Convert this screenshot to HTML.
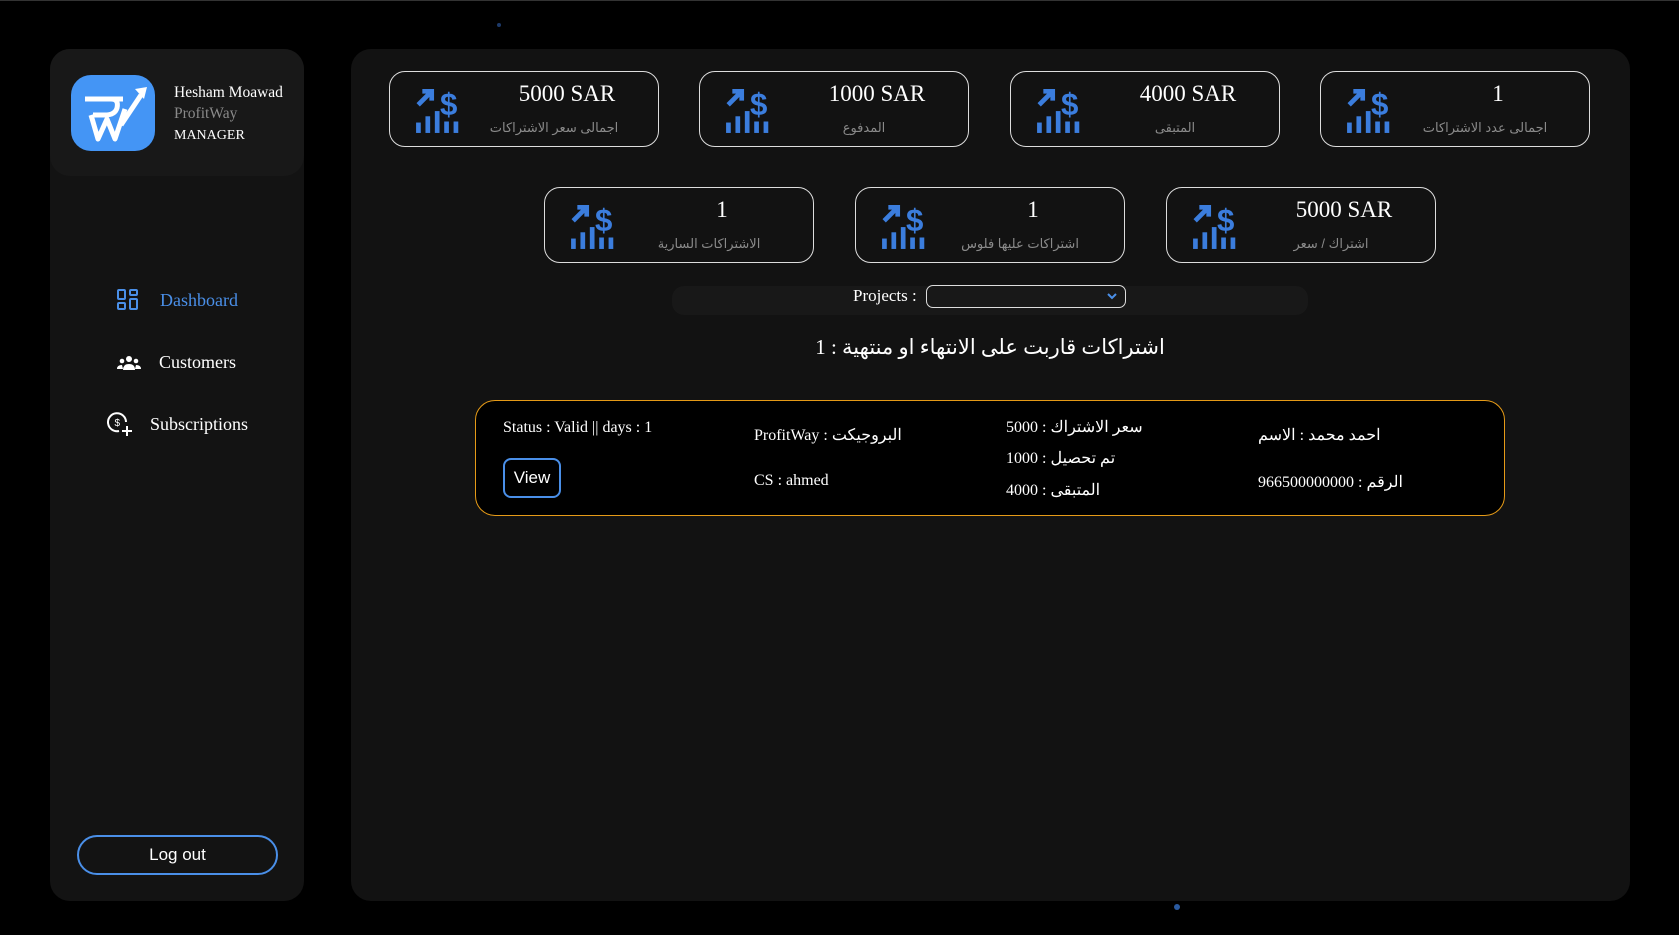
<!DOCTYPE html>
<html><head><meta charset="utf-8"><style>
*{box-sizing:border-box;margin:0;padding:0}
body{width:1679px;height:935px;background:#000;font-family:"Liberation Serif","Noto Serif CJK SC",serif;color:#fff;position:relative;overflow:hidden;border-top:1px solid #333}
.side{position:absolute;left:50px;top:48px;width:254px;height:852px;background:#131313;border-radius:20px}
.head{position:absolute;left:0;top:0;width:254px;height:127px;background:#181818;border-radius:20px}
.logo{position:absolute;left:21px;top:26px;width:84px;height:76px;background:#4495f5;border-radius:20px}
.uname{position:absolute;left:124px;top:33px;font-size:15.5px;line-height:21px}
.nav{position:absolute;left:0;font-size:18px;display:flex;align-items:center}
.main{position:absolute;left:351px;top:48px;width:1279px;height:852px;background:#121212;border-radius:20px}
.card{position:absolute;width:270px;height:76px;border:1.5px solid #ddd;border-radius:16px}
.card svg{position:absolute;left:24px;top:12px}
.card .v{position:absolute;left:100px;right:14px;top:9px;text-align:center;font-size:23px}
.card .l{position:absolute;left:80px;right:20px;top:48px;text-align:center;font-size:13px;color:#8a8a8a;font-family:"Liberation Sans","DejaVu Sans",sans-serif}
.sub{position:absolute;left:475px;top:399px;width:1030px;height:116px;background:#000;border:1.5px solid #e59a17;border-radius:20px;font-size:16px}
.sub div{position:absolute;white-space:nowrap}
.star{position:absolute;width:4px;height:4px;border-radius:50%;background:#1d3a6a}
</style></head><body>
<div class="star" style="left:497px;top:22px"></div>
<div class="star" style="left:637px;top:561px"></div>
<div class="star" style="left:437px;top:705px"></div>
<div class="star" style="left:1273px;top:658px;width:6px;height:6px"></div>
<div class="star" style="left:1174px;top:903px;width:6px;height:6px;background:#2a5aa0"></div>
<div class="star" style="left:1295px;top:606px"></div>

<div class="side">
<div class="head">
<div class="logo"><svg width="84" height="76" viewBox="0 0 84 76"><g fill="none" stroke="#fff" stroke-width="5" stroke-linejoin="round"><path d="M14 24 H40 Q48 24 46 33 Q44 40 34 40 H22"/><path d="M20 40 L27 64 L36 44 L44 64 L54 34"/><path d="M40 24 H52"/><path d="M50 50 L70 20"/></g><path d="M64 14 L76 12 L73 24 Z" fill="#fff"/></svg></div>
<div class="uname">Hesham Moawad<br><span style="color:#8a8a8a">ProfitWay</span><br><span style="font-size:14px">MANAGER</span></div>
</div>
<div class="nav" style="left:67px;top:240px;color:#4a8fe8"><svg width="22" height="22" viewBox="0 0 22 22" fill="none" stroke="#4a8fe8" stroke-width="2"><rect x="1" y="1" width="7" height="9" rx="1"/><rect x="13" y="1" width="7" height="5" rx="1"/><rect x="1" y="14" width="7" height="6" rx="1"/><rect x="13" y="10" width="7" height="10" rx="1"/></svg><span style="margin-left:21px">Dashboard</span></div>
<div class="nav" style="left:67px;top:303px"><svg width="24" height="16" viewBox="0 0 24 16" fill="#fff"><circle cx="12" cy="4" r="3"/><circle cx="5" cy="6" r="2.3"/><circle cx="19" cy="6" r="2.3"/><path d="M6 15 Q6 9 12 9 Q18 9 18 15Z"/><path d="M0 14 Q0 10 5 10 L6 14Z M24 14 Q24 10 19 10 L18 14Z"/></svg><span style="margin-left:18px">Customers</span></div>
<div class="nav" style="left:57px;top:362px"><svg width="26" height="26" viewBox="0 0 26 26" fill="none" stroke="#fff" stroke-width="2"><path d="M19 11 A9 9 0 1 0 12 20"/><text x="7.5" y="15" font-size="10" fill="#fff" stroke="none" font-family="Liberation Sans">$</text><path d="M20 15 V25 M15 20 H25"/></svg><span style="margin-left:17px">Subscriptions</span></div>
<div style="position:absolute;left:27px;top:786px;width:201px;height:40px;border:2px solid #4a8fe8;border-radius:20px;text-align:center;line-height:36px;font-family:'Liberation Sans',sans-serif;font-size:17px">Log out</div>
</div>

<div class="main"></div>
<svg width="0" height="0" style="position:absolute"><defs><symbol id="ic" viewBox="0 0 48 48"><path d="M4 20 L16 8 M8 7 H17 V16" stroke="#3b7ddd" stroke-width="4.5" fill="none"/><text x="25" y="30" font-size="30" font-weight="bold" fill="#3b7ddd" font-family="Liberation Sans">$</text><g fill="#3b7ddd"><rect x="2" y="37" width="4.5" height="10"/><rect x="11" y="31" width="4.5" height="16"/><rect x="20" y="26" width="4.5" height="21"/><rect x="29" y="36" width="4.5" height="11"/><rect x="38" y="36" width="4.5" height="11"/></g></symbol></defs></svg>

<div class="card" style="left:389px;top:70px"><svg width="50" height="50"><use href="#ic"/></svg><div class="v">5000 SAR</div><div class="l">اجمالى سعر الاشتراكات</div></div>
<div class="card" style="left:699px;top:70px"><svg width="50" height="50"><use href="#ic"/></svg><div class="v">1000 SAR</div><div class="l">المدفوع</div></div>
<div class="card" style="left:1010px;top:70px"><svg width="50" height="50"><use href="#ic"/></svg><div class="v">4000 SAR</div><div class="l">المتبقى</div></div>
<div class="card" style="left:1320px;top:70px"><svg width="50" height="50"><use href="#ic"/></svg><div class="v">1</div><div class="l">اجمالى عدد الاشتراكات</div></div>
<div class="card" style="left:544px;top:186px"><svg width="50" height="50"><use href="#ic"/></svg><div class="v">1</div><div class="l">الاشتراكات السارية</div></div>
<div class="card" style="left:855px;top:186px"><svg width="50" height="50"><use href="#ic"/></svg><div class="v">1</div><div class="l">اشتراكات عليها فلوس</div></div>
<div class="card" style="left:1166px;top:186px"><svg width="50" height="50"><use href="#ic"/></svg><div class="v">5000 SAR</div><div class="l">اشتراك / سعر</div></div>

<div style="position:absolute;left:672px;top:285px;width:636px;height:29px;background:#181818;border-radius:12px"></div>
<div style="position:absolute;left:853px;top:285px;font-size:17px;line-height:20px">Projects :</div>
<div style="position:absolute;left:926px;top:284px;width:200px;height:23px;border:1.5px solid #ddd;border-radius:7px"><svg style="position:absolute;right:8px;top:7px" width="10" height="7" viewBox="0 0 10 7"><path d="M1 1 L5 5 L9 1" stroke="#4a8fe8" stroke-width="2" fill="none"/></svg></div>
<div style="position:absolute;left:700px;width:580px;top:334px;text-align:center;font-size:21px;font-family:'Liberation Serif','DejaVu Sans',serif" dir="rtl">اشتراكات قاربت على الانتهاء او منتهية : 1</div>

<div class="sub">
<div style="left:27px;top:18px">Status : Valid || days : 1</div>
<div style="left:27px;top:57px;width:58px;height:40px;border:2px solid #4a8fe8;border-radius:8px;text-align:center;line-height:36px;font-family:'Liberation Sans',sans-serif;font-size:17px">View</div>
<div style="left:278px;top:24px">ProfitWay : البروجيكت</div>
<div style="left:278px;top:71px">CS : ahmed</div>
<div style="left:530px;top:16px">5000 : سعر الاشتراك</div>
<div style="left:530px;top:47px">1000 : تم تحصيل</div>
<div style="left:530px;top:79px">4000 : المتبقى</div>
<div style="left:782px;top:24px">احمد محمد : الاسم</div>
<div style="left:782px;top:71px">966500000000 : الرقم</div>
</div>
</body></html>
